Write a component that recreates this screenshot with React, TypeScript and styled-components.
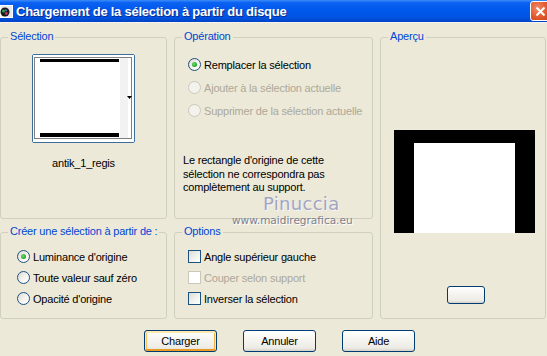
import styled, { createGlobalStyle } from "styled-components";

const GlobalStyle = createGlobalStyle`
  html, body {
    margin: 0;
    padding: 0;
    background: #ece9d8;
  }
  body {
    font-family: "Liberation Sans", Arial, sans-serif;
    font-size: 11px;
    letter-spacing: -0.2px;
    color: #000;
  }
`;

const Window = styled.div`
  position: relative;
  width: 547px;
  height: 356px;
  overflow: hidden;
  background: #ece9d8;
`;

const TitleBar = styled.div`
  height: 22px;
  display: flex;
  align-items: center;
  background: linear-gradient(
    180deg,
    #3d8ef7 0%,
    #0b62f2 12%,
    #0058ec 45%,
    #0053e2 80%,
    #0042c4 100%
  );
  border-bottom: 1px solid #f4f3ee;
`;

const TitleIcon = styled.svg`
  width: 13px;
  height: 13px;
  flex-shrink: 0;
`;

const TitleText = styled.span`
  margin-left: 3px;
  font-size: 13px;
  font-weight: bold;
  letter-spacing: -0.25px;
  color: #fff;
  text-shadow: 1px 1px 0 #0a2a8a;
  white-space: nowrap;
`;

const CloseButton = styled.div`
  margin-left: auto;
  margin-right: -4px;
  width: 21px;
  height: 20px;
  box-sizing: border-box;
  border: 1px solid #fff;
  border-radius: 3px;
  background: radial-gradient(circle at 35% 35%, #f08a6a 0%, #e2572c 55%, #c8401a 100%);
  display: flex;
  align-items: center;
  justify-content: center;
`;

const Body = styled.div`
  padding-top: 14px;
`;

const Grid = styled.div`
  display: grid;
  grid-template-columns: 167px 199px 166px;
  grid-template-rows: 182px 87px;
  column-gap: 7px;
  row-gap: 13px;
`;

const Group = styled.div<{ $area: string }>`
  position: relative;
  box-sizing: border-box;
  border: 1px solid #d0d0bf;
  border-radius: 3px;
  grid-area: ${(p) => p.$area};
`;

const GroupLabel = styled.span`
  position: absolute;
  top: -8px;
  left: 7px;
  padding: 0 2px;
  background: #ece9d8;
  color: #0046d5;
  line-height: 13px;
  white-space: nowrap;
`;

const SelectionBody = styled.div`
  display: flex;
  flex-direction: column;
  align-items: center;
  padding-top: 16px;
`;

const Thumb = styled.div`
  width: 103px;
  height: 89px;
  box-sizing: border-box;
  border: 1px solid #3c6e9c;
  border-radius: 2px;
  background: #fff;
`;

const ThumbName = styled.div`
  margin-top: 14px;
  line-height: 13px;
`;

const OptionList = styled.div<{ $pad: string; $row: number }>`
  display: flex;
  flex-direction: column;
  padding: ${(p) => p.$pad};
  & > * {
    height: ${(p) => p.$row}px;
  }
`;

const Choice = styled.label<{ $disabled?: boolean }>`
  display: flex;
  align-items: center;
  gap: 3px;
  color: ${(p) => (p.$disabled ? "#aca899" : "#000")};
  white-space: nowrap;
`;

const Radio = styled.span<{ $checked?: boolean; $disabled?: boolean }>`
  position: relative;
  width: 13px;
  height: 13px;
  box-sizing: border-box;
  border-radius: 50%;
  border: 1px solid ${(p) => (p.$disabled ? "#cac8bb" : "#1c5180")};
  background: ${(p) =>
    p.$disabled ? "#f3f2ec" : "linear-gradient(135deg, #dcd9cf 0%, #f6f5f1 55%, #ffffff 100%)"};
  flex-shrink: 0;
  &::after {
    content: "";
    display: ${(p) => (p.$checked ? "block" : "none")};
    position: absolute;
    left: 3px;
    top: 3px;
    width: 5px;
    height: 5px;
    border-radius: 50%;
    background: radial-gradient(circle at 40% 40%, #6be06b 0%, #21a121 70%);
  }
`;

const Check = styled.span<{ $disabled?: boolean }>`
  width: 13px;
  height: 13px;
  box-sizing: border-box;
  border: 1px solid ${(p) => (p.$disabled ? "#cac8bb" : "#1c5180")};
  background: ${(p) =>
    p.$disabled ? "#fff" : "linear-gradient(135deg, #dcdcd7 0%, #f4f4f0 60%, #ffffff 100%)"};
  flex-shrink: 0;
`;

const Note = styled.p`
  margin: 32px 0 0 8px;
  line-height: 13.5px;
`;

const PreviewBody = styled.div`
  display: flex;
  flex-direction: column;
  align-items: center;
  padding-left: 3px;
`;

const Preview = styled.div`
  margin-top: 92px;
  width: 141px;
  height: 103px;
  box-sizing: border-box;
  background: #fff;
  border-style: solid;
  border-color: #000;
  border-width: 13px 20px 0 20px;
`;

const SmallButton = styled.div`
  margin-top: 53px;
  margin-left: 2px;
  width: 38px;
  height: 18px;
  box-sizing: border-box;
  border: 1px solid #003c74;
  border-radius: 3px;
  background: linear-gradient(180deg, #ffffff 0%, #f4f3ee 50%, #ecebe6 85%, #d6d0c5 100%);
`;

const ButtonRow = styled.div`
  display: flex;
  gap: 26px;
  padding: 11px 0 0 144px;
`;

const Button = styled.div<{ $default?: boolean }>`
  width: 73px;
  height: 22px;
  box-sizing: border-box;
  border: 1px solid #003c74;
  border-radius: 3px;
  background: linear-gradient(180deg, #ffffff 0%, #f4f3ee 50%, #ecebe6 85%, #d6d0c5 100%);
  box-shadow: ${(p) =>
    p.$default
      ? "inset 0 1px 0 1px #fde8b0, inset 0 -1px 0 1px #ea9b22, inset 1px 0 0 1px #f8c460, inset -1px 0 0 1px #f2b040"
      : "none"};
  display: flex;
  align-items: center;
  justify-content: center;
  font-size: 11px;
`;

const WatermarkName = styled.div`
  position: absolute;
  left: 263px;
  top: 193px;
  font-family: "DejaVu Sans", sans-serif;
  font-size: 18px;
  letter-spacing: 0.3px;
  color: #a2a5c2;
  text-shadow: 1px 1px 0 #f6f6fa;
`;

const WatermarkUrl = styled.div`
  position: absolute;
  left: 232px;
  top: 214px;
  font-family: "DejaVu Sans", sans-serif;
  font-size: 10.5px;
  letter-spacing: 0;
  color: #7e7f8e;
  text-shadow: 1px 1px 0 #ffffff;
`;

function ThumbDrawing() {
  return (
    <svg width="101" height="87" viewBox="0 0 101 87">
      <rect x="0" y="0" width="101" height="87" fill="#fff" />
      <rect x="87" y="3" width="8" height="80" fill="#f2f2f2" />
      <rect x="7" y="4" width="79" height="3" fill="#000" />
      <rect x="7" y="78" width="79" height="4" fill="#000" />
      <polygon points="94,41 99,41 96.5,44" fill="#000" />
      <rect
        x="1.5"
        y="2.5"
        width="97"
        height="81"
        fill="none"
        stroke="#000"
        strokeWidth="1"
        strokeDasharray="1 1"
      />
    </svg>
  );
}

export default function App() {
  return (
    <>
      <GlobalStyle />
      <Window>
        <TitleBar>
          <TitleIcon viewBox="0 0 13 13">
            <rect x="0.5" y="0.5" width="12" height="12" fill="#e8e8e8" stroke="#fff" />
            <circle cx="5" cy="7" r="4.5" fill="#1a1a1a" />
            <circle cx="3.5" cy="6" r="1.5" fill="#2fa84f" />
            <circle cx="6.3" cy="8.5" r="1.4" fill="#c8306a" />
            <circle cx="6" cy="5.3" r="1.1" fill="#3a6ad8" />
          </TitleIcon>
          <TitleText>Chargement de la sélection à partir du disque</TitleText>
          <CloseButton>
            <svg width="11" height="11" viewBox="0 0 11 11">
              <path d="M1.5 1.5 L9.5 9.5 M9.5 1.5 L1.5 9.5" stroke="#fff" strokeWidth="2" />
            </svg>
          </CloseButton>
        </TitleBar>
        <Body>
          <Grid>
            <Group $area="1 / 1">
              <GroupLabel>Sélection</GroupLabel>
              <SelectionBody>
                <Thumb>
                  <ThumbDrawing />
                </Thumb>
                <ThumbName>antik_1_regis</ThumbName>
              </SelectionBody>
            </Group>
            <Group $area="1 / 2">
              <GroupLabel>Opération</GroupLabel>
              <OptionList $pad="15px 0 0 13px" $row={23}>
                <Choice>
                  <Radio $checked />
                  Remplacer la sélection
                </Choice>
                <Choice $disabled>
                  <Radio $disabled />
                  Ajouter à la sélection actuelle
                </Choice>
                <Choice $disabled>
                  <Radio $disabled />
                  Supprimer de la sélection actuelle
                </Choice>
              </OptionList>
              <Note>
                Le rectangle d'origine de cette
                <br />
                sélection ne correspondra pas
                <br />
                complètement au support.
              </Note>
            </Group>
            <Group $area="1 / 3 / 3 / 4">
              <GroupLabel>Aperçu</GroupLabel>
              <PreviewBody>
                <Preview />
                <SmallButton />
              </PreviewBody>
            </Group>
            <Group $area="2 / 1">
              <GroupLabel>Créer une sélection à partir de :</GroupLabel>
              <OptionList $pad="13px 0 0 16px" $row={21}>
                <Choice>
                  <Radio $checked />
                  Luminance d'origine
                </Choice>
                <Choice>
                  <Radio />
                  Toute valeur sauf zéro
                </Choice>
                <Choice>
                  <Radio />
                  Opacité d'origine
                </Choice>
              </OptionList>
            </Group>
            <Group $area="2 / 2">
              <GroupLabel>Options</GroupLabel>
              <OptionList $pad="13px 0 0 13px" $row={21}>
                <Choice>
                  <Check />
                  Angle supérieur gauche
                </Choice>
                <Choice $disabled>
                  <Check $disabled />
                  Couper selon support
                </Choice>
                <Choice>
                  <Check />
                  Inverser la sélection
                </Choice>
              </OptionList>
            </Group>
          </Grid>
          <ButtonRow>
            <Button $default>Charger</Button>
            <Button>Annuler</Button>
            <Button>Aide</Button>
          </ButtonRow>
        </Body>
        <WatermarkName>Pinuccia</WatermarkName>
        <WatermarkUrl>www.maidiregrafica.eu</WatermarkUrl>
      </Window>
    </>
  );
}
